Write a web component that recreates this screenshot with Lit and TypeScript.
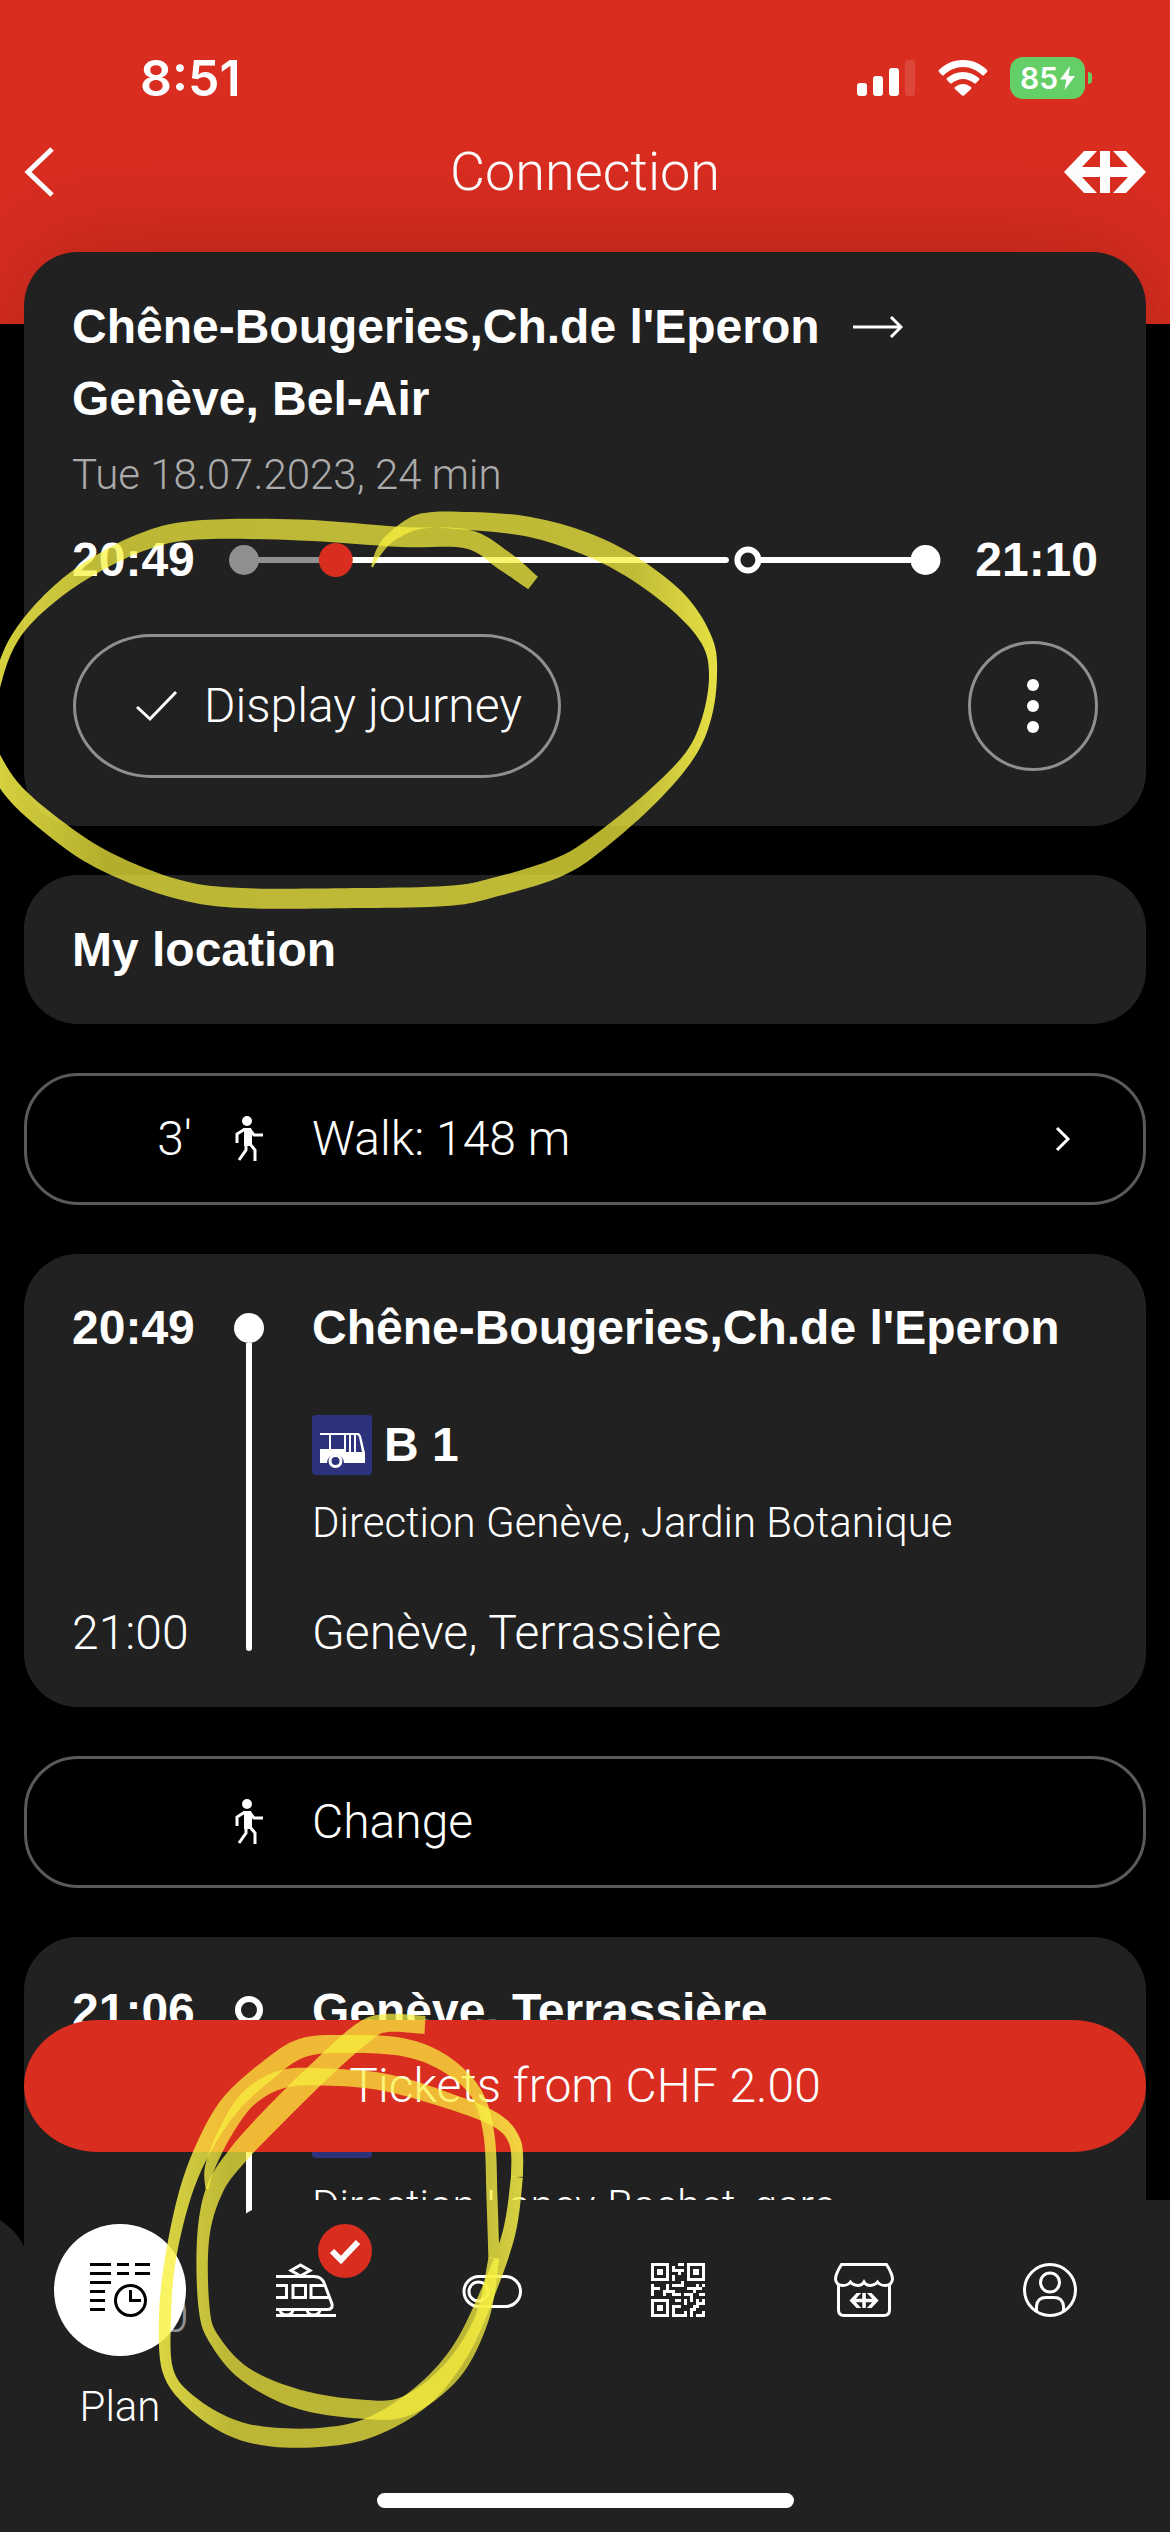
import { LitElement, html, css, svg, nothing } from "lit";
import { customElement, property } from "lit/decorators.js";

type Point = [x: number, y: number, width: number];

interface Leg {
  depart: string;
  from: string;
  line?: string;
  direction: string;
  arrive: string;
  to?: string;
  start: "dot" | "ring";
}

const legs: Leg[] = [
  {
    depart: "20:49",
    from: "Chêne-Bougeries,Ch.de l'Eperon",
    line: "B 1",
    direction: "Direction Genève, Jardin Botanique",
    arrive: "21:00",
    to: "Genève, Terrassière",
    start: "dot",
  },
  {
    depart: "21:06",
    from: "Genève, Terrassière",
    direction: "Direction Lancy-Bachet, gare",
    arrive: "21:10",
    start: "ring",
  },
];

const qrRows = [
  "111111...11.111111",
  "100001.1....100001",
  "101101.1111.101101",
  "101101...1..101101",
  "100001.1....100001",
  "111111.1....111111",
  "..........1.......",
  "1....1.1111....1.1",
  "111..1......11111.",
  "1...1111......1...",
  "1...1..111.111..11",
  ".............1....",
  "111111..11.1.1.1.1",
  "100001.....1...111",
  "101101.111....11..",
  "101101.1.....11...",
  "100001.1...1.1...1",
  "111111.11111.1.111",
];

/* Hand-drawn marker strokes: centre line plus the nib width at each point. */
const topStrokes: Point[][] = [
  [
    [533, 583, 16], [503, 560, 20], [467, 539, 19], [402, 537, 20], [300, 530, 21], [197, 530, 19],
    [145, 541, 18], [97, 564, 16], [58, 591, 13], [24, 625, 9], [5, 658, 8], [-8, 705, 7],
  ],
  [
    [-16, 736, 12], [10, 787, 18], [60, 832, 20], [109, 863, 20], [177, 889, 19], [242, 898, 20],
    [363, 898, 20], [446, 896, 20], [488, 889, 19], [557, 868, 19], [599, 842, 17], [652, 797, 14],
    [690, 755, 10], [707, 717, 9], [713, 675, 8], [707, 641, 12], [679, 603, 20], [632, 567, 22],
    [584, 543, 22], [530, 527, 20], [470, 521, 18], [422, 521, 15], [394, 535, 10], [380, 550, 7], [372, 567, 2],
  ],
];

const bottomStrokes: Point[][] = [
  [
    [425, 2025, 18], [387, 2023, 18], [364, 2032, 22], [325, 2066, 22], [276, 2114, 22], [237, 2156, 20],
    [214, 2191, 17], [203, 2240, 12], [204, 2307, 11], [214, 2339, 11], [245, 2374, 14], [298, 2399, 19],
    [360, 2409, 19], [406, 2406, 20], [452, 2371, 20], [482, 2318, 14], [494, 2258, 11],
  ],
  [
    [494, 2258, 11], [492, 2198, 11], [489, 2135, 11], [476, 2093, 12], [444, 2063, 16], [402, 2047, 18],
    [344, 2044, 18], [302, 2048, 19], [268, 2070, 20], [230, 2105, 20], [203, 2149, 16], [184, 2198, 13],
    [170, 2262, 11], [165, 2318, 12], [168, 2371, 11], [191, 2402, 13], [230, 2427, 17], [272, 2437, 19],
    [325, 2437, 19], [371, 2427, 20], [421, 2397, 22], [459, 2353, 18], [486, 2297, 15], [509, 2233, 13],
    [517, 2177, 12],
  ],
  [
    [517, 2177, 12], [515, 2142, 12], [494, 2119, 14], [440, 2098, 16], [383, 2082, 17], [325, 2077, 17],
    [283, 2079, 18], [249, 2098, 17], [226, 2131, 14], [210, 2167, 10], [207, 2189, 3],
  ],
];

function curve(points: number[][]): string {
  let d = "";
  for (let i = 0; i < points.length - 1; i++) {
    const a = points[Math.max(i - 1, 0)];
    const b = points[i];
    const c = points[i + 1];
    const e = points[Math.min(i + 2, points.length - 1)];
    d += `C${(b[0] + (c[0] - a[0]) / 6).toFixed(1)} ${(b[1] + (c[1] - a[1]) / 6).toFixed(1)} `;
    d += `${(c[0] - (e[0] - b[0]) / 6).toFixed(1)} ${(c[1] - (e[1] - b[1]) / 6).toFixed(1)} `;
    d += `${c[0].toFixed(1)} ${c[1].toFixed(1)}`;
  }
  return d;
}

function ribbon(points: Point[]): string {
  const left: number[][] = [];
  const right: number[][] = [];
  points.forEach(([x, y, w], i) => {
    const p = points[Math.max(i - 1, 0)];
    const n = points[Math.min(i + 1, points.length - 1)];
    const dx = n[0] - p[0];
    const dy = n[1] - p[1];
    const len = Math.hypot(dx, dy) || 1;
    const ox = (-dy / len) * (w / 2);
    const oy = (dx / len) * (w / 2);
    left.push([x + ox, y + oy]);
    right.unshift([x - ox, y - oy]);
  });
  return `M${left[0].join(" ")}${curve(left)}L${right[0].join(" ")}${curve(right)}Z`;
}

const crossArrow =
  "M20 0H33L18 16H36V0H46V16H64L49 0H62L82 21L62 42H49L64 26H46V42H36V26H18L33 42H20L0 21Z";

const walker = html`<svg class="walker" viewBox="0 0 28 46" aria-hidden="true">
  <circle cx="12" cy="5" r="5" fill="#fff" />
  <path d="M8 12H16L17 15V30H9V16Z" fill="#fff" />
  <path d="M10 13L2 18V27M15 14L19 19H28M11 28V34L4 44M15 28L20 34V45" fill="none" stroke="#fff" stroke-width="3" />
</svg>`;

const busIcon = html`<svg class="bus" viewBox="0 0 60 60" aria-hidden="true">
  <rect width="60" height="60" rx="4" fill="#2d327d" />
  <path d="M8 18H46Q48 18 49 21L53 38V48H32A8.500 8.500 0 0 0 15 48H8V34H17V20H8ZM19 20V34H32V20ZM34 20V37H37V20ZM39 20V37H42V20ZM44 20V37H50L47 22Q46 20 45 20Z" fill="#fff" fill-rule="evenodd" />
  <path d="M8 20H17V34H8Z" fill="#2d327d" />
  <circle cx="23.500" cy="46" r="5.500" fill="none" stroke="#fff" stroke-width="3" />
</svg>`;

const planIcon = svg`<g fill="none" stroke="#000" stroke-width="3">
  <path d="M0 4.500H21M27 4.500H39M45 4.500H60M0 13.500H21M27 13.500H39M45 13.500H60M0 22.500H21M0 31.500H15M0 40.500H15M0 49.500H15" />
  <circle cx="40.500" cy="40.500" r="15" />
  <path d="M40.500 30V40.500H51" />
</g>`;

const trainIcon = svg`<g fill="none" stroke="#fff" stroke-width="3">
  <path d="M24.500 5L34 10.500L24.500 16L15 10.500Z" />
  <path d="M0 16.500H38Q46 16.500 48.500 24L56 44Q57 49.500 51 49.500H0" />
  <path d="M0 25.500H10.500V37.500H0M17 25.500H29.500V37.500H17ZM50 25.500H35V37.500H53" />
  <path d="M0 55.500H60M4 50Q5 55 10.500 55Q16 55 17 50M31 50Q32 55 37.500 55Q43 55 44 50" />
</g>`;

const toggleIcon = svg`<g fill="none" stroke="#fff" stroke-width="3">
  <rect x="2" y="16.500" width="56.500" height="30" rx="15" />
  <circle cx="16.500" cy="31.500" r="9.500" />
</g>`;

const qrIcon = svg`<path transform="translate(3 3)" fill="#fff" shape-rendering="crispEdges" d=${qrRows
  .map((row, y) => [...row].map((c, x) => (c === "1" ? `M${x * 3} ${y * 3}h3v3h-3z` : "")).join(""))
  .join("")} />`;

const shopIcon = svg`<g fill="none" stroke="#fff" stroke-width="3">
  <path d="M7.500 4.500H52.500Q58.500 14 58.500 19Q58 25.500 51 25.500Q46 25.500 43.500 22Q41 25.500 36.500 25.500Q32 25.500 30 22Q28 25.500 23.500 25.500Q19 25.500 16.500 22Q14 25.500 9 25.500Q2 25.500 1.500 19Q1.500 14 7.500 4.500Z" />
  <path d="M4.500 25V50Q4.500 55.500 10 55.500H50Q55.500 55.500 55.500 50V25" />
</g>
<path d=${crossArrow} fill="#fff" transform="translate(15.500 33) scale(.355)" />`;

const profileIcon = svg`<g fill="none" stroke="#fff" stroke-width="3">
  <circle cx="30" cy="30" r="25.500" />
  <circle cx="30" cy="22.500" r="9.500" />
  <path d="M16.500 51V46Q17.500 37.500 26 37.500H34Q42.500 37.500 43.500 46V51" />
</g>`;

@customElement("trip-leg")
class TripLeg extends LitElement {
  @property({ attribute: false }) leg!: Leg;

  static styles = css`
    :host {
      display: block;
    }
    .leg {
      display: grid;
      grid-template-columns: 120px 114px 1fr;
      background: #212121;
      border-radius: 54px;
      padding: 38px 48px;
      color: #fff;
    }
    .times {
      display: flex;
      flex-direction: column;
      justify-content: space-between;
      white-space: nowrap;
    }
    .strong {
      font: 700 48px/72px "Liberation Sans", sans-serif;
    }
    .light {
      min-height: 72px;
      font: 300 48px/72px Roboto, sans-serif;
    }
    .rail {
      display: flex;
      flex-direction: column;
      align-items: center;
      padding: 21px 0 18px;
    }
    .dot,
    .ring {
      box-sizing: border-box;
      width: 30px;
      height: 30px;
      border-radius: 50%;
      background: #fff;
    }
    .ring {
      width: 28px;
      height: 28px;
      border: 6px solid #fff;
      background: none;
      margin-bottom: 6px;
    }
    .bar {
      flex: 1;
      width: 6px;
      background: #fff;
      border-radius: 0 0 3px 3px;
    }
    .stops {
      padding-left: 6px;
    }
    .line {
      display: flex;
      gap: 12px;
      margin-top: 51px;
      font: 700 48px/60px "Liberation Sans", sans-serif;
    }
    .bus {
      width: 60px;
      height: 60px;
    }
    .direction {
      margin: 20px 0 46px;
      font: 300 42px/56px Roboto, sans-serif;
    }
  `;

  render() {
    const l = this.leg;
    return html`<section class="leg">
      <div class="times">
        <span class="strong">${l.depart}</span>
        <span class="light">${l.arrive}</span>
      </div>
      <div class="rail"><span class=${l.start}></span><span class="bar"></span></div>
      <div class="stops">
        <div class="strong">${l.from}</div>
        <div class="line">${busIcon}${l.line ? html`<span>${l.line}</span>` : nothing}</div>
        <div class="direction">${l.direction}</div>
        <div class="light">${l.to ?? nothing}</div>
      </div>
    </section>`;
  }
}

@customElement("app-root")
class AppRoot extends LitElement {
  static styles = css`
    :host {
      display: block;
      position: relative;
      height: 100vh;
      overflow: hidden;
      background: linear-gradient(#d92d20 324px, #000 324px);
      color: #fff;
      font: 300 48px/72px Roboto, sans-serif;
    }
    button {
      font: inherit;
      color: inherit;
      background: none;
      border: 0;
      padding: 0;
      margin: 0;
      cursor: pointer;
    }
    svg {
      display: block;
    }
    .status {
      display: flex;
      align-items: center;
      padding: 52px 78px 0 140px;
      height: 52px;
    }
    .clock {
      flex: 1;
      font: 600 50px/52px Inter, sans-serif;
    }
    .signal {
      width: 58px;
      height: 36px;
      margin-right: 23px;
    }
    .wifi {
      width: 50px;
      height: 36px;
      margin-right: 22px;
    }
    .battery {
      display: flex;
      align-items: center;
      justify-content: center;
      gap: 2px;
      width: 75px;
      height: 42px;
      border-radius: 13px;
      background: #65cf67;
      font: 600 30px/42px Inter, sans-serif;
    }
    .bolt {
      width: 15px;
      height: 24px;
    }
    .nub {
      width: 4px;
      height: 12px;
      margin-left: 3px;
      border-radius: 0 4px 4px 0;
      background: #65cf67;
    }
    .titlebar {
      display: grid;
      grid-template-columns: 90px 1fr 90px;
      align-items: center;
      height: 136px;
      padding: 0 24px;
    }
    .title {
      margin: 0;
      text-align: center;
      font: 300 54px/72px Roboto, sans-serif;
    }
    .back svg {
      width: 32px;
      height: 50px;
    }
    .logo {
      width: 82px;
      height: 42px;
      justify-self: end;
    }
    .list {
      display: flex;
      flex-direction: column;
      gap: 49px;
      padding: 12px 24px 0;
    }
    .card {
      background: #212121;
      border-radius: 54px;
      padding: 39px 48px 38px;
    }
    .summary {
      padding-bottom: 48px;
      box-shadow: 0 0 110px rgba(0, 0, 0, 0.2);
    }
    .strong {
      margin: 0;
      font: 700 48px/72px "Liberation Sans", sans-serif;
    }
    .arrow {
      display: inline-block;
      width: 50px;
      height: 24px;
      margin-left: 20px;
      vertical-align: 4px;
    }
    .date {
      margin: 12px 0 27px;
      color: #ababab;
      font: 300 42px/56px Roboto, sans-serif;
    }
    .timeline {
      display: flex;
      align-items: center;
      gap: 34px;
      height: 60px;
    }
    .timeline svg {
      flex: 1;
      min-width: 0;
    }
    .actions {
      display: flex;
      align-items: center;
      justify-content: space-between;
      margin-top: 44px;
    }
    .pill {
      display: flex;
      align-items: center;
      gap: 26px;
      height: 144px;
      box-sizing: border-box;
      padding: 0 36px 0 60px;
      border: 3px solid #8f8f8f;
      border-radius: 78px / 72px;
      margin-left: 1px;
    }
    .tick {
      width: 42px;
      height: 32px;
    }
    .more {
      display: grid;
      place-items: center;
      width: 130px;
      height: 130px;
      border: 3px solid #8f8f8f;
      border-radius: 50%;
      box-sizing: border-box;
    }
    .more svg {
      width: 12px;
      height: 54px;
    }
    .transfer {
      display: grid;
      grid-template-columns: 120px 114px 1fr auto;
      align-items: center;
      box-sizing: border-box;
      width: 100%;
      height: 132px;
      padding: 0 72px 0 45px;
      border: 3px solid #5a5a5a;
      border-radius: 54px;
      text-align: left;
    }
    .minutes {
      text-align: right;
    }
    .walker {
      width: 28px;
      height: 46px;
      justify-self: center;
    }
    .what {
      padding-left: 6px;
    }
    .go {
      width: 16px;
      height: 26px;
    }
    .tickets {
      position: absolute;
      left: 24px;
      right: 24px;
      bottom: 380px;
      height: 132px;
      border-radius: 74px / 66px;
      background: #d92d20;
      text-align: center;
    }
    .nav {
      position: absolute;
      left: 0;
      right: 0;
      bottom: 0;
    }
    .base {
      position: absolute;
      inset: 0;
      display: flex;
    }
    .base svg {
      width: 300px;
      height: 332px;
    }
    .fill {
      flex: 1;
      background: #212121;
    }
    .tabs {
      position: relative;
      display: grid;
      grid-template-columns: repeat(6, 1fr);
      padding: 24px 27px 0;
    }
    .tab {
      position: relative;
      display: flex;
      flex-direction: column;
      align-items: center;
      gap: 23px;
      font: 300 42px/56px Roboto, sans-serif;
    }
    .icon {
      display: grid;
      place-items: center;
      width: 132px;
      height: 132px;
      border-radius: 50%;
    }
    .icon svg {
      width: 60px;
      height: 60px;
    }
    .active {
      background: #fff;
    }
    .badge {
      position: absolute;
      top: 0;
      right: 27px;
      width: 54px;
      height: 54px;
    }
    .home {
      position: relative;
      width: 417px;
      height: 15px;
      margin: 58px auto 24px;
      border-radius: 8px;
      background: #fff;
    }
    .marker {
      position: absolute;
      top: 0;
      left: 0;
      width: 100%;
      pointer-events: none;
    }
  `;

  private tab(name: string, icon: unknown, active = false, badge: unknown = nothing) {
    return html`<button class="tab" aria-label=${name}>
      <span class="icon ${active ? "active" : ""}"><svg viewBox="0 0 60 60" aria-hidden="true">${icon}</svg></span>
      ${active ? html`<span>${name}</span>` : nothing}${badge}
    </button>`;
  }

  render() {
    return html`
      <header>
        <div class="status">
          <span class="clock">8:51</span>
          <svg class="signal" viewBox="0 0 58 36" fill="#fff" aria-hidden="true">
            <rect y="23" width="10" height="13" rx="3" />
            <rect x="16" y="16" width="10" height="20" rx="3" />
            <rect x="32" y="8" width="10" height="28" rx="3" />
            <rect x="48" width="10" height="36" rx="3" opacity=".12" />
          </svg>
          <svg class="wifi" viewBox="0 0 50 36" fill="#fff" aria-hidden="true">
            <path d="M25 0C35 0 43 4 49 10Q50 11 49 12L46 15Q45 16 44 15C39 10 32 7 25 7S11 10 6 15Q5 16 4 15L1 12Q0 11 1 10C7 4 15 0 25 0Z" />
            <path d="M25 12C31 12 36 14 41 18Q42 19 41 20L38 23Q37 24 36 23C33 21 29 19 25 19S17 21 14 23Q13 24 12 23L9 20Q8 19 9 18C14 14 19 12 25 12Z" />
            <path d="M25 24C28 24 30 25 33 27Q34 28 33 29L26 35.500Q25 36 24 35.500L17 29Q16 28 17 27C20 25 22 24 25 24Z" />
          </svg>
          <span class="battery">85<svg class="bolt" viewBox="0 0 15 24" aria-hidden="true"><path d="M10 0L0 13.500H6.500L4.500 24L15 10H8.500Z" fill="#fff" /></svg></span>
          <span class="nub"></span>
        </div>
        <div class="titlebar">
          <button class="back" aria-label="Back">
            <svg viewBox="0 0 32 50" aria-hidden="true"><path d="M28 2L4 25L28 48" fill="none" stroke="#fff" stroke-width="5" /></svg>
          </button>
          <h1 class="title">Connection</h1>
          <svg class="logo" viewBox="0 0 82 42" aria-hidden="true"><path d=${crossArrow} fill="#fff" /></svg>
        </div>
      </header>
      <main class="list">
        <section class="card summary">
          <h2 class="strong">
            Chêne-Bougeries,Ch.de l'Eperon
            <svg class="arrow" viewBox="0 0 50 24" aria-hidden="true"><path d="M0 12H48M38 2L48 12L38 22" fill="none" stroke="#fff" stroke-width="3" /></svg><br />Genève, Bel-Air
          </h2>
          <p class="date">Tue 18.07.2023, 24 min</p>
          <div class="timeline">
            <span class="strong">20:49</span>
            <svg viewBox="0 0 714 36" aria-hidden="true">
              <path d="M15 18H107" stroke="#8f8f8f" stroke-width="6" />
              <path d="M107 18H498M532 18H699" stroke="#fff" stroke-width="6" stroke-linecap="round" />
              <circle cx="15" cy="18" r="15" fill="#8f8f8f" />
              <circle cx="107" cy="18" r="17" fill="#d92d20" />
              <circle cx="520" cy="18" r="10.500" fill="none" stroke="#fff" stroke-width="6" />
              <circle cx="698" cy="18" r="15" fill="#fff" />
            </svg>
            <span class="strong">21:10</span>
          </div>
          <div class="actions">
            <button class="pill">
              <svg class="tick" viewBox="0 0 42 32" aria-hidden="true"><path d="M1 17L14 29L40 2" fill="none" stroke="#fff" stroke-width="3" /></svg>
              <span>Display journey</span>
            </button>
            <button class="more" aria-label="More">
              <svg viewBox="0 0 12 54" fill="#fff" aria-hidden="true"><circle cx="6" cy="6" r="6" /><circle cx="6" cy="27" r="6" /><circle cx="6" cy="48" r="6" /></svg>
            </button>
          </div>
        </section>
        <section class="card"><h2 class="strong">My location</h2></section>
        <button class="transfer">
          <span class="minutes">3'</span>${walker}<span class="what">Walk: 148 m</span>
          <svg class="go" viewBox="0 0 16 26" aria-hidden="true"><path d="M2 2L13 13L2 24" fill="none" stroke="#fff" stroke-width="3" /></svg>
        </button>
        <trip-leg .leg=${legs[0]}></trip-leg>
        <div class="transfer"><span></span>${walker}<span class="what">Change</span></div>
        <trip-leg .leg=${legs[1]}></trip-leg>
      </main>
      <button class="tickets">Tickets from CHF 2.00</button>
      <nav class="nav">
        <div class="base">
          <svg viewBox="0 0 300 332" aria-hidden="true">
            <path d="M0 20C12 28 20 37 24 47V90C24 140 70 175 120 175S215 145 215 85C217 45 232 20 252 10Q270 0 300 0V332H0Z" fill="#212121" />
            <path d="M24 47V90C24 140 70 175 120 175S215 145 215 85V60H24Z" fill="#212121" opacity=".5" />
          </svg>
          <span class="fill"></span>
        </div>
        <div class="tabs">
          ${this.tab("Plan", planIcon, true)}
          ${this.tab("Trips", trainIcon, false, html`<svg class="badge" viewBox="0 0 54 54" aria-hidden="true">
            <circle cx="27" cy="27" r="27" fill="#d92d20" />
            <path d="M14 27L23 36L40 18" fill="none" stroke="#fff" stroke-width="6" />
          </svg>`)}
          ${this.tab("EasyRide", toggleIcon)} ${this.tab("Tickets", qrIcon)}
          ${this.tab("Shop", shopIcon)} ${this.tab("Profile", profileIcon)}
        </div>
        <div class="home"></div>
      </nav>
      <svg class="marker" viewBox="0 0 1170 2532" aria-hidden="true">
        <defs>
          <linearGradient id="ink-top" gradientUnits="userSpaceOnUse" x1="0" x2="720" y1="0" y2="0">
            <stop offset="0" stop-color="#f8f248" stop-opacity=".86" />
            <stop offset=".15" stop-color="#f8f23e" stop-opacity=".72" />
            <stop offset=".88" stop-color="#f8f23e" stop-opacity=".74" />
            <stop offset="1" stop-color="#f8f248" stop-opacity=".92" />
          </linearGradient>
          <linearGradient id="ink-bottom" gradientUnits="userSpaceOnUse" x1="160" x2="520" y1="0" y2="0">
            <stop offset="0" stop-color="#f8f248" stop-opacity=".86" />
            <stop offset=".2" stop-color="#f8f03e" stop-opacity=".72" />
            <stop offset=".85" stop-color="#f8f03e" stop-opacity=".72" />
            <stop offset="1" stop-color="#f8f248" stop-opacity=".84" />
          </linearGradient>
        </defs>
        ${topStrokes.map((s) => svg`<path d=${ribbon(s)} fill="url(#ink-top)" />`)}
        ${bottomStrokes.map((s) => svg`<path d=${ribbon(s)} fill="url(#ink-bottom)" />`)}
      </svg>
    `;
  }
}
